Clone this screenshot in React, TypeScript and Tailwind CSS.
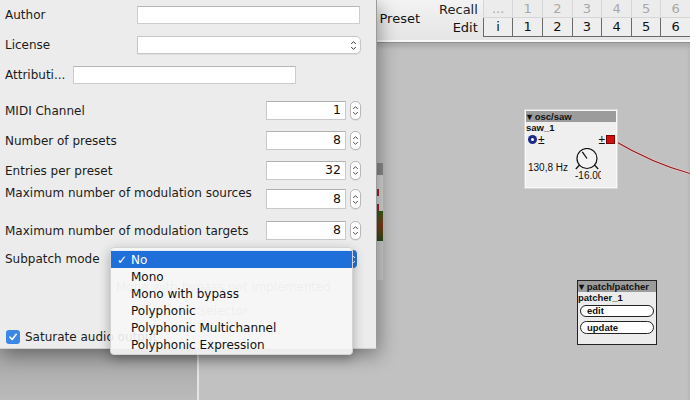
import React from "react";

function Stepper({ h = 19 }: { h?: number }) {
  return (
    <div
      className="w-[11px] rounded-[5px] border border-[#b8b8b8] bg-white flex items-center justify-center shadow-[0_1px_0_rgba(0,0,0,0.06)]"
      style={{ height: h }}
    >
      <svg width="7" height="13" viewBox="0 0 7 13">
        <path d="M1.2 5 L3.5 2.6 L5.8 5 M1.2 8 L3.5 10.4 L5.8 8" stroke="#555" fill="none" strokeWidth="1" />
      </svg>
    </div>
  );
}

function NumRow({ label, value, mt, h = 19, labelTop = false }: { label: string; value: string; mt: number; h?: number; labelTop?: boolean }) {
  return (
    <div className="flex items-center pl-[5px] pr-[15px]" style={{ marginTop: mt, height: h }}>
      <div className={"flex-1 text-[12px] text-[#1b1b1b] " + (labelTop ? "self-start -mt-[5px]" : "")}>{label}</div>
      <div
        className="w-[80px] bg-white border border-[#c9c9c9] border-t-[#b0b0b0] text-right pr-[4px] text-[12.5px] text-[#111] leading-none flex items-center justify-end"
        style={{ height: h }}
      >
        {value}
      </div>
      <div className="ml-[4px]">
        <Stepper h={h} />
      </div>
    </div>
  );
}

export default function App() {
  return (
    <div className="relative w-[690px] h-[400px] overflow-hidden bg-[#c1c1c1] font-['DejaVu_Sans',sans-serif]">
      {/* patcher window behind */}
      <div className="absolute inset-0 flex flex-col">
        <div className="h-[43px] bg-gradient-to-b from-[#f3f3f3] to-[#e4e4e4] border-b border-[#8e8e8e] shadow-[inset_0_-2px_0_#f8f8f8] flex items-start justify-end">
          <div className="flex items-center h-[37px] mr-[19px] text-[13px] text-[#111]">Preset</div>
          <div className="flex flex-col items-end pr-[5px] text-[13px] leading-none">
            <div className="h-[18px] flex items-center text-[#222]">Recall</div>
            <div className="h-[19px] flex items-center text-[#111]">Edit</div>
          </div>
          <div className="grid grid-cols-[repeat(7,29.6px)] grid-rows-[18px_19px] text-[13px]">
            {["…", "1", "2", "3", "4", "5", "6"].map((t) => (
              <div key={"r" + t} className="flex items-center justify-center border-l border-b border-[#d6d6d6] bg-[#ececec] text-[#a8a8a8]">
                {t === "…" ? "..." : t}
              </div>
            ))}
            {["i", "1", "2", "3", "4", "5", "6"].map((t) => (
              <div key={"e" + t} className="flex items-center justify-center border-l border-b border-[#6a6a6a] bg-[#eeeeee] text-[#111]">
                {t}
              </div>
            ))}
          </div>
        </div>
        <div className="relative flex-1 bg-[#c1c1c1] shadow-[inset_0_4px_4px_rgba(0,0,0,0.12)]">
          {/* wire */}
          <svg className="absolute inset-0" width="690" height="357" viewBox="0 43 690 357">
            <path d="M613 140 C 640 156, 665 167, 692 174" stroke="#f0c8c8" strokeWidth="2.5" fill="none" />
            <path d="M613 140 C 640 156, 665 167, 692 174" stroke="#8a1c1c" strokeWidth="1.1" fill="none" />
          </svg>
          {/* osc/saw */}
          <div className="absolute left-[525px] top-[67px] w-[92px] h-[78px] bg-[#efefef] border border-[#fafafa] shadow-[0_0_0_1px_#d6d6d6] font-['Liberation_Sans',sans-serif]">
            <div className="h-[11px] bg-[#9c9c9c] text-[9.5px] font-bold leading-[11px] pl-[1px] text-[#111]">▾ osc/saw</div>
            <div className="h-[12px] text-[9.5px] font-bold leading-[12px] text-[#111]">saw_1</div>
            <div className="flex items-center h-[11px] pl-[2px]">
              <div className="w-[9px] h-[9px] rounded-full bg-[#1e2a8c] flex items-center justify-center">
                <div className="w-[3px] h-[3px] rounded-full bg-white"></div>
              </div>
              <span className="ml-[1px] text-[12px] leading-none text-[#111]">±</span>
              <div className="flex-1"></div>
              <span className="text-[12px] leading-none text-[#111]">±</span>
              <div className="w-[9px] h-[9px] bg-[#d20f0f] border border-[#7a0000] ml-[1px] mr-[1px]"></div>
            </div>
            <div className="flex items-start mt-[3px]">
              <div className="pl-[2px] pt-[12px] text-[10px] text-[#111] w-[48px]">130,8 Hz</div>
              <div className="flex flex-col items-start w-[30px]">
                <svg width="28" height="23" viewBox="0 0 28 23">
                  <circle cx="13" cy="10.5" r="10" fill="#f4f4f4" stroke="#111" strokeWidth="1.2" />
                  <path d="M13 10.5 L8.3 3.8" stroke="#111" strokeWidth="1.3" />
                  <path d="M5.5 17 L1.8 21 M20.5 17 L24.2 21" stroke="#111" strokeWidth="1.2" />
                </svg>
                <div className="ml-[1px] w-[26px] overflow-hidden whitespace-nowrap text-[10px] text-[#111] leading-[10px]">-16.00</div>
              </div>
            </div>
          </div>
          {/* patch/patcher */}
          <div className="absolute left-[577px] top-[237px] w-[80px] h-[65px] bg-[#ececec] border border-[#222] font-['Liberation_Sans',sans-serif]">
            <div className="h-[11px] bg-[#9c9c9c] text-[9.5px] font-bold leading-[11px] pl-[1px] text-[#111]">▾ patch/patcher</div>
            <div className="h-[12px] text-[9.5px] font-bold leading-[12px] text-[#111]">patcher_1</div>
            <div className="mx-[2px] mt-[1px] h-[12px] rounded-full border border-[#222] bg-white text-[9.5px] font-bold leading-[10px] pl-[6px] text-[#111]">edit</div>
            <div className="mx-[2px] mt-[4px] h-[13px] rounded-full border border-[#222] bg-white text-[9.5px] font-bold leading-[11px] pl-[6px] text-[#111]">update</div>
          </div>
        </div>
      </div>

      {/* window peeking behind dialog */}
      <div className="absolute left-[376px] top-[163px] w-[7px] h-[117px] bg-[#d8d8d8] flex flex-col">
        <div className="h-[12px] bg-[#8c8c8c]"></div>
        <div className="h-[14px]"></div>
        <div className="h-[7px] bg-[#9b2a2a] w-[3px]"></div>
        <div className="h-[8px]"></div>
        <div className="h-[7px] bg-[#9b2a2a] w-[3px]"></div>
        <div className="h-[30px] bg-gradient-to-b from-[#2e5e18] via-[#7a3a12] to-[#244c12]"></div>
        <div className="flex-1 bg-[#cfcfcf]"></div>
      </div>

      {/* lower left window behind */}
      <div className="absolute left-0 top-[345px] w-[199px] h-[60px] bg-gradient-to-b from-[#a4a4a4] to-[#bdbdbd] border-r-2 border-[#e4e4e4]"></div>

      {/* dialog */}
      <div className="absolute left-0 top-0 w-[377px] h-[349px] bg-[#ececec] border-r border-[#9a9a9a] border-b border-b-[#d0d0d0] shadow-[2px_6px_18px_rgba(0,0,0,0.38)] flex flex-col text-[#1b1b1b]">
        {/* Author */}
        <div className="flex items-center h-[18px] mt-[6px] pl-[5px]">
          <div className="w-[132px] text-[12px]">Author</div>
          <div className="w-[223px] h-[18px] bg-white border border-[#cdcdcd] border-t-[#b5b5b5]"></div>
        </div>
        {/* License */}
        <div className="flex items-center h-[18px] mt-[12px] pl-[5px]">
          <div className="w-[132px] text-[12px]">License</div>
          <div className="w-[224px] h-[18px] bg-white border border-[#c6c6c6] rounded-r-[5px] flex justify-end shadow-[0_1px_0_rgba(0,0,0,0.06)]">
            <div className="w-[14px] h-full flex items-center justify-center">
              <svg width="7" height="13" viewBox="0 0 7 13">
                <path d="M1.2 5 L3.5 2.6 L5.8 5 M1.2 8 L3.5 10.4 L5.8 8" stroke="#444" fill="none" strokeWidth="1" />
              </svg>
            </div>
          </div>
        </div>
        {/* Attribution */}
        <div className="flex items-center h-[18px] mt-[12px] pl-[5px]">
          <div className="w-[68px] text-[12px]">Attributi...</div>
          <div className="w-[223px] h-[18px] bg-white border border-[#cdcdcd] border-t-[#b5b5b5]"></div>
        </div>
        <NumRow label="MIDI Channel" value="1" mt={17} />
        <NumRow label="Number of presets" value="8" mt={11} />
        <NumRow label="Entries per preset" value="32" mt={11} />
        <NumRow label="Maximum number of modulation sources" value="8" mt={9} h={20} labelTop />
        <NumRow label="Maximum number of modulation targets" value="8" mt={12} />
        {/* Subpatch */}
        <div className="flex items-center h-[18px] mt-[10px] pl-[5px]">
          <div className="w-[105px] text-[12px]">Subpatch mode</div>
          <div className="w-[247px] h-[18px] rounded-[4px] bg-[#2a71d8] flex justify-end">
            <div className="w-[8px] h-full flex items-center justify-center">
              <svg width="5" height="11" viewBox="0 0 5 11">
                <path d="M1 4 L2.5 2.2 L4 4 M1 7 L2.5 8.8 L4 7" stroke="#fff" fill="none" strokeWidth="1" />
              </svg>
            </div>
          </div>
        </div>
        <div className="mt-[10px] pl-[116px] text-[12px] text-[#9a9a9a]">Mono with bypass not implemented</div>
        <div className="mt-[6px] pl-[200px] text-[12px] text-[#9a9a9a]">selector</div>
        {/* checkbox */}
        <div className="mt-auto mb-[4px] flex items-center pl-[6px] h-[14px]">
          <div className="w-[14px] h-[14px] rounded-[3px] bg-[#3b87e6] flex items-center justify-center">
            <svg width="10" height="10" viewBox="0 0 10 10">
              <path d="M2 5.2 L4.2 7.5 L8.2 2.3" stroke="#fff" strokeWidth="1.6" fill="none" strokeLinecap="round" strokeLinejoin="round" />
            </svg>
          </div>
          <div className="ml-[5px] text-[12px]">Saturate audio output</div>
        </div>
      </div>

      {/* popup menu */}
      <div className="absolute left-[110px] top-[247px] w-[243px] h-[108px] bg-[rgba(247,247,247,0.9)] rounded-[4px] border border-[#d4d4d4] shadow-[0_4px_12px_rgba(0,0,0,0.3)] pt-[3px] text-[12px] text-[#111]">
        {["No", "Mono", "Mono with bypass", "Polyphonic", "Polyphonic Multichannel", "Polyphonic Expression"].map((t, i) => (
          <div key={t} className={"h-[17px] flex items-center " + (i === 0 ? "bg-[#1e6fd9] text-white" : "")}>
            <div className="w-[20px] pl-[6px] text-[12px]">{i === 0 ? "✓" : ""}</div>
            <div>{t}</div>
          </div>
        ))}
      </div>
    </div>
  );
}
